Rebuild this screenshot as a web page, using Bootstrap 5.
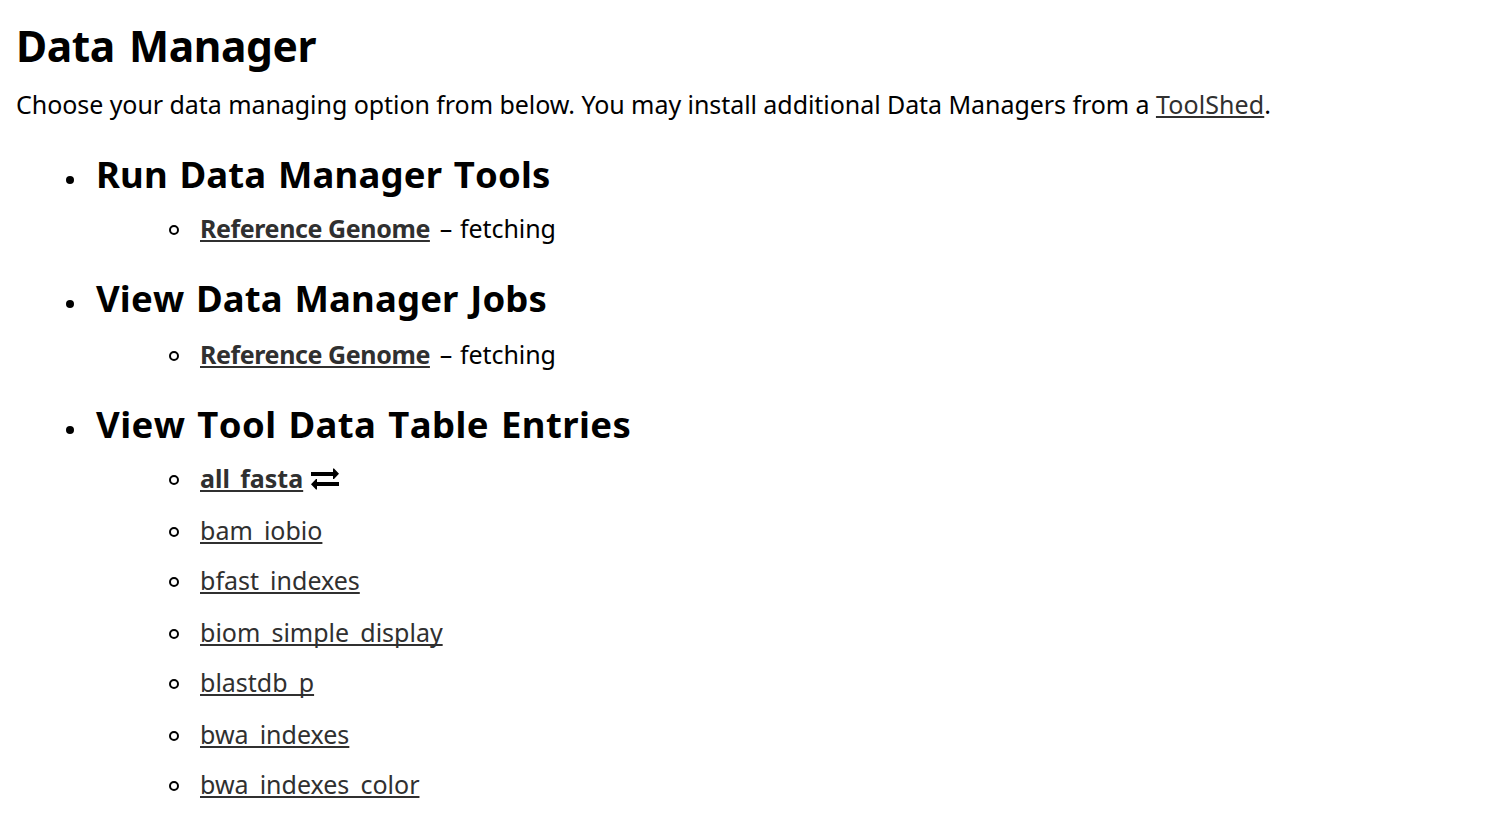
<!DOCTYPE html>
<html lang="en">
<head>
<meta charset="utf-8">
<meta name="viewport" content="width=device-width, initial-scale=1">
<title>Data Manager</title>
<link href="https://cdn.jsdelivr.net/npm/bootstrap@5.3.0/dist/css/bootstrap.min.css" rel="stylesheet">
<style>
body{font-family:"Noto Sans",sans-serif;font-size:25px;color:#000;background:#fff;height:826px;overflow:hidden;white-space:nowrap}
a,a:hover{color:#303030;text-decoration:underline;text-decoration-thickness:2px;text-underline-offset:2px;text-decoration-skip-ink:none}
h1{font-size:42.5px;font-weight:700;line-height:58px;padding:17px 0 0 16px;letter-spacing:-.4px;word-spacing:3.5px}
.intro{line-height:36px;padding:11px 0 0 16px;letter-spacing:-.06px}
.intro a{letter-spacing:.1px}
.sections{padding-top:23px}
.sect + .sect{margin-top:16px}
.sect h2{font-size:36.5px;font-weight:700;line-height:58px;height:58px;font-kerning:none;letter-spacing:.15px;word-spacing:2px}
.sect:last-child h2{letter-spacing:.42px}
.sect h2::before{content:"";width:8px;height:8px;border-radius:50%;background:#000;margin:12px 22px 0 66px}
.entry{height:50px;line-height:50px}
.entry::before{content:"";width:10px;height:10px;border:2px solid #000;border-radius:50%;margin:4px 21px 0 169px}
.tables .entry:nth-child(odd){margin-bottom:2px}
.jobs{padding-top:2px}
.tool{letter-spacing:-.4px}
.desc{word-spacing:1.5px;margin-left:2px;letter-spacing:-.1px}
.swap{margin:2px 0 0 8px}
</style>
</head>
<body>
<h1 class="m-0">Data Manager</h1>
<p class="intro m-0">Choose your data managing option from below. You may install additional Data Managers from a <a href="#">ToolShed</a>.</p>
<ul class="sections list-unstyled m-0">
  <li class="sect">
    <h2 class="d-flex align-items-center m-0"><span>Run Data Manager Tools</span></h2>
    <ul class="list-unstyled">
      <li class="entry d-flex align-items-center"><a class="tool fw-bold" href="#">Reference Genome</a><span class="desc">&nbsp;– fetching</span></li>
    </ul>
  </li>
  <li class="sect">
    <h2 class="d-flex align-items-center m-0"><span>View Data Manager Jobs</span></h2>
    <ul class="jobs list-unstyled">
      <li class="entry d-flex align-items-center"><a class="tool fw-bold" href="#">Reference Genome</a><span class="desc">&nbsp;– fetching</span></li>
    </ul>
  </li>
  <li class="sect">
    <h2 class="d-flex align-items-center m-0"><span>View Tool Data Table Entries</span></h2>
    <ul class="tables list-unstyled">
      <li class="entry d-flex align-items-center"><a class="fw-bold" href="#">all_fasta</a><svg class="swap" width="28" height="22" viewBox="0 0 28 22" aria-hidden="true"><path d="M0 4h22V.5h1L28 5.8 23 11h-1V8H0zM28 18H6v3.5H5L0 16.2 5 11h1v3h22z"/></svg></li>
      <li class="entry d-flex align-items-center"><a href="#">bam_iobio</a></li>
      <li class="entry d-flex align-items-center"><a href="#">bfast_indexes</a></li>
      <li class="entry d-flex align-items-center"><a href="#">biom_simple_display</a></li>
      <li class="entry d-flex align-items-center"><a href="#">blastdb_p</a></li>
      <li class="entry d-flex align-items-center"><a href="#">bwa_indexes</a></li>
      <li class="entry d-flex align-items-center"><a href="#">bwa_indexes_color</a></li>
    </ul>
  </li>
</ul>
<script src="https://cdn.jsdelivr.net/npm/bootstrap@5.3.0/dist/js/bootstrap.bundle.min.js"></script>
</body>
</html>
